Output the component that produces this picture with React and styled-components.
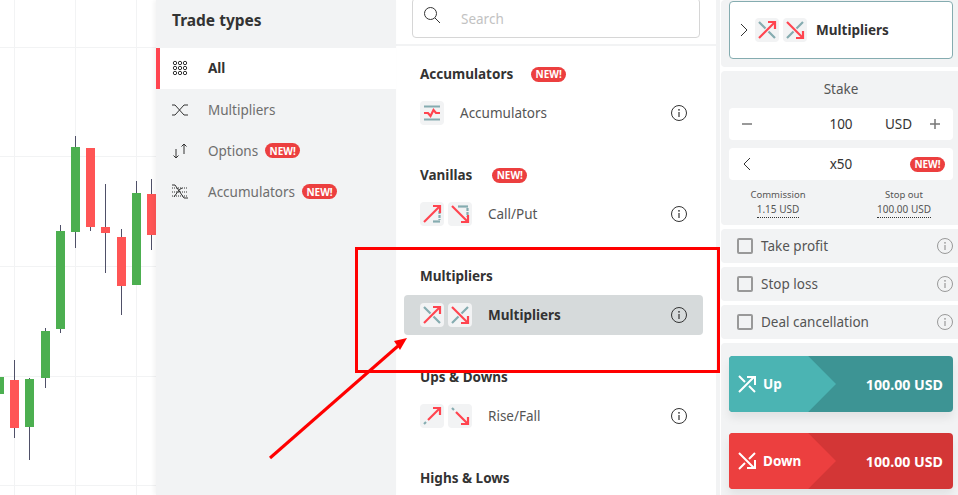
import styled, { createGlobalStyle } from "styled-components";

const GlobalStyle = createGlobalStyle`
  html, body {
    margin: 0;
    height: 100%;
    overflow: hidden;
    background: #fff;
    font-family: "Noto Sans", "Liberation Sans", sans-serif;
  }
`;

const RED = "#ff444f";
const TEAL = "#85acb0";

const candles = [
  { x: -5, top: 377, bottom: 394, up: true },
  { x: 10, top: 380, bottom: 428, wickTop: 360, wickBottom: 438 },
  { x: 25, top: 379, bottom: 427, wickTop: 378, wickBottom: 460, up: true },
  { x: 41, top: 331, bottom: 378, wickTop: 328, wickBottom: 388, up: true },
  { x: 56, top: 231, bottom: 329, wickTop: 225, wickBottom: 333, up: true },
  { x: 71, top: 147, bottom: 232, wickTop: 136, wickBottom: 248, up: true },
  { x: 86, top: 148, bottom: 227, wickTop: 148, wickBottom: 231 },
  { x: 101, top: 227, bottom: 233, wickTop: 184, wickBottom: 273 },
  { x: 117, top: 237, bottom: 286, wickTop: 229, wickBottom: 315 },
  { x: 132, top: 193, bottom: 285, wickTop: 181, wickBottom: 285, up: true },
  { x: 147, top: 194, bottom: 235, wickTop: 179, wickBottom: 250 },
];

const Page = styled.div`
  position: relative;
  display: flex;
  width: 958px;
  height: 495px;
  overflow: hidden;
`;

const ChartWrap = styled.div`
  width: 156px;
  flex-shrink: 0;
  svg { display: block; }
`;

const Sidebar = styled.nav`
  width: 240px;
  flex-shrink: 0;
  background: #f2f3f4;
  box-shadow: -2px 0 4px rgba(0, 0, 0, 0.05);
  z-index: 1;
`;

const SideTitle = styled.h2`
  height: 48px;
  margin: 0;
  padding: 10px 0 0 16px;
  box-sizing: border-box;
  font-size: 15.5px;
  line-height: 20px;
  font-weight: 700;
  color: #333;
`;

const SideRow = styled.div`
  display: flex;
  align-items: center;
  height: 41px;
  box-sizing: border-box;
  padding: 0 0 ${(p) => (p.$active ? 2 : 0)}px 12px;
  border-left: 4px solid ${(p) => (p.$active ? RED : "transparent")};
  background: ${(p) => (p.$active ? "#fff" : "transparent")};
  color: ${(p) => (p.$active ? "#333" : "#6e6e6e")};
  font-size: 13.5px;
  font-weight: ${(p) => (p.$active ? 700 : 400)};
  svg { flex-shrink: 0; margin-right: 20px; }
`;

const Badge = styled.span`
  display: inline-flex;
  align-items: center;
  justify-content: center;
  width: 35px;
  height: 15px;
  margin-left: ${(p) => p.$gap || 7}px;
  border-radius: 8px;
  background: #ec3f3f;
  color: #fff;
  font-size: 10px;
  font-weight: 700;
`;

const Main = styled.main`
  width: 324px;
  flex-shrink: 0;
  box-sizing: border-box;
  border-right: 4px solid #f2f3f4;
`;

const SearchBar = styled.div`
  height: 48px;
  box-sizing: border-box;
  padding-left: 16px;
  border-bottom: 2px solid #f2f3f4;
`;

const SearchBox = styled.div`
  display: flex;
  align-items: center;
  width: 288px;
  height: 40px;
  margin-top: -2px;
  box-sizing: border-box;
  border: 1px solid #d6d6d6;
  border-radius: 4px;
  color: #c2c2c2;
  font-size: 13.5px;
  svg { margin: -6px 20px 0 10px; }
`;

const SearchText = styled.span`
  padding-top: 2px;
`;

const Section = styled.section`
  height: 101px;
  padding: 18px 13px 0 8px;
  box-sizing: border-box;
`;

const Heading = styled.h3`
  display: flex;
  align-items: center;
  height: 20px;
  margin: 0 0 9px;
  padding-left: 16px;
  font-size: 13.5px;
  font-weight: 700;
  color: #333;
`;

const Item = styled.div`
  display: flex;
  align-items: center;
  height: 40px;
  padding: 0 16px;
  border-radius: 4px;
  background: ${(p) => (p.$active ? "#d6dadb" : "transparent")};
  color: ${(p) => (p.$active ? "#333" : "#555")};
  font-size: 13.5px;
  font-weight: ${(p) => (p.$active ? 700 : 400)};
`;

const Tiles = styled.div`
  display: flex;
  gap: 4px;
  margin-right: 16px;
`;

const Tile = styled.span`
  display: block;
  width: 24px;
  height: 24px;
  border-radius: 4px;
  background: #f2f3f4;
  svg { display: block; }
`;

const Label = styled.span`
  flex: 1;
`;

const Aside = styled.aside`
  flex: 1;
  display: flex;
  flex-direction: column;
  gap: 4px;
  margin-left: 1px;
`;

const Panel = styled.div`
  box-sizing: border-box;
  padding: ${(p) => p.$pad || "8px 5px 8px 8px"};
  height: ${(p) => p.$h}px;
  flex-shrink: 0;
  background: #f2f3f4;
  border-radius: 4px 0 0 4px;
`;

const ContractCard = styled.div`
  display: flex;
  align-items: center;
  height: 58px;
  box-sizing: border-box;
  padding-left: 10px;
  border: 1px solid ${TEAL};
  border-radius: 4px;
  background: #fff;
  color: #333;
  font-size: 13.5px;
  font-weight: 700;
  ${Tiles} { margin: 0 9px 0 7px; }
`;

const StakeLabel = styled.div`
  height: 20px;
  margin: 0 0 9px;
  line-height: 20px;
  text-align: center;
  font-size: 13.5px;
  color: #555;
`;

const InputRow = styled.div`
  display: grid;
  grid-template-columns: 1fr 48px 1fr;
  align-items: center;
  height: 32px;
  margin-bottom: 8px;
  padding: 0 12px;
  border-radius: 4px;
  background: #fff;
  color: #333;
  font-size: 13.5px;
  text-align: center;
`;

const RowStart = styled.div`
  display: flex;
  align-items: center;
  padding-left: ${(p) => p.$inset || 0}px;
`;

const RowEnd = styled.div`
  display: flex;
  align-items: center;
  justify-content: space-between;
  padding-left: 20px;
`;

const RowBadge = styled.div`
  display: flex;
  justify-content: flex-end;
  margin-right: -4px;
`;

const Stats = styled.div`
  display: flex;
  justify-content: space-between;
`;

const Stat = styled.div`
  width: 98px;
  text-align: center;
  font-size: 9.5px;
  line-height: 14px;
  color: #555;
  b {
    display: inline-block;
    font-size: 10px;
    font-weight: 400;
    padding-bottom: 1px;
    border-bottom: 1px dotted #333;
  }
`;

const OptionRow = styled.div`
  display: flex;
  align-items: center;
  height: 34px;
  flex-shrink: 0;
  padding: 0 5px 0 16px;
  background: #f2f3f4;
  border-radius: 4px 0 0 4px;
  color: #555;
  font-size: 13.5px;
`;

const Check = styled.span`
  width: 16px;
  height: 16px;
  margin-right: 8px;
  box-sizing: border-box;
  border: 2px solid #999;
  border-radius: 2px;
`;

const BuyWrap = styled.div`
  margin-bottom: 21px;
  border-radius: 4px;
  box-shadow: 0 6px 10px rgba(0, 0, 0, 0.07);
`;

const Buy = styled.div`
  display: flex;
  align-items: center;
  justify-content: space-between;
  height: 56px;
  border-radius: 4px;
  overflow: hidden;
  background: ${(p) => (p.$down ? "#d33636" : "#3d9494")};
  color: #fff;
  font-size: 13.5px;
  font-weight: 700;
`;

const BuyLeft = styled.div`
  display: flex;
  align-items: center;
  gap: 7px;
  width: 107px;
  height: 100%;
  padding-left: 9px;
  box-sizing: border-box;
  background: ${(p) => (p.$down ? "#ec3f3f" : "#4bb4b3")};
  clip-path: polygon(0 0, 74% 0, 100% 50%, 74% 100%, 0 100%);
`;

const BuyAmount = styled.span`
  padding-right: 10px;
  font-size: 14.2px;
`;

const Frame = styled.div`
  position: absolute;
  left: 355px;
  top: 247px;
  width: 365px;
  height: 126px;
  box-sizing: border-box;
  border: 3px solid #f00;
  z-index: 2;
`;

const Arrow = styled.svg`
  position: absolute;
  left: 260px;
  top: 330px;
  z-index: 2;
`;

const ln = { strokeWidth: 2.2, fill: "none" };

function UpArrow({ d = "M4 20 20 4", head = "M13 4h7v7" }) {
  return (
    <g stroke={RED} {...ln}>
      <path d={d} />
      <path d={head} />
    </g>
  );
}

function DownArrow({ d = "M4 4 20 20", head = "M13 20h7v-7" }) {
  return (
    <g stroke={RED} {...ln}>
      <path d={d} />
      <path d={head} />
    </g>
  );
}

const tileArt = {
  acc: (
    <>
      <path d="M4 5.5h16M4 18.5h16" stroke={TEAL} {...ln} />
      <path d="M4 12h4l2.5 3 3-6 2.5 3H20" stroke={RED} {...ln} />
    </>
  ),
  call: (
    <>
      <path d="M13 19.5h7" stroke={TEAL} {...ln} />
      <path d="M19.5 9v9" stroke={TEAL} strokeDasharray="3 1" {...ln} />
      <UpArrow />
    </>
  ),
  put: (
    <>
      <path d="M10 4.5h10" stroke={TEAL} {...ln} />
      <path d="M19.5 6v9" stroke={TEAL} strokeDasharray="3 1" {...ln} />
      <DownArrow />
    </>
  ),
  multUp: (
    <>
      <path d="M4 4l6.500 6.500M13.500 13.500 20 20" stroke={TEAL} {...ln} />
      <UpArrow />
    </>
  ),
  multDown: (
    <>
      <path d="M20 4l-6.500 6.500M10.500 13.500 4 20" stroke={TEAL} {...ln} />
      <DownArrow />
    </>
  ),
  rise: (
    <>
      <path d="M4 20l2-2" stroke={TEAL} {...ln} />
      <UpArrow d="M8 16 20 4" />
    </>
  ),
  fall: (
    <>
      <path d="M4 4l2 2" stroke={TEAL} {...ln} />
      <DownArrow d="M8 8 20 20" />
    </>
  ),
};

function TradeTile({ art }) {
  return (
    <Tile>
      <svg width="24" height="24" viewBox="0 0 24 24">{tileArt[art]}</svg>
    </Tile>
  );
}

function InfoIcon({ color = "#333" }) {
  return (
    <svg width="16" height="16" viewBox="0 0 16 16" fill="none">
      <circle cx="8" cy="8" r="7.5" stroke={color} />
      <circle cx="8" cy="4.8" r="0.9" fill={color} />
      <path d="M8 7v5" stroke={color} strokeWidth="1.2" />
    </svg>
  );
}

function Chevron({ left, color = "#333" }) {
  return (
    <svg width="8" height="14" viewBox="0 0 8 14" fill="none">
      <path d={left ? "M7 1 1 7l6 6" : "M1 1l6 6-6 6"} stroke={color} />
    </svg>
  );
}

function MenuIcon({ kind }) {
  const common = { width: 16, height: 16, viewBox: "0 0 16 16", fill: "none", stroke: "#333" };
  if (kind === "all") {
    const dots = [];
    for (let r = 0; r < 3; r++) {
      for (let c = 0; c < 3; c++) {
        dots.push(<circle key={`${r}-${c}`} cx={3 + c * 5} cy={3 + r * 5} r="1.7" />);
      }
    }
    return <svg {...common}>{dots}</svg>;
  }
  if (kind === "mult") {
    return (
      <svg {...common}>
        <path d="M0 3h3l9 10h4M0 13h3l9-10h4" />
      </svg>
    );
  }
  if (kind === "options") {
    return (
      <svg {...common}>
        <path d="M4 6v9M1.5 12.5 4 15l2.5-2.5M12 11V1M9.500 3.500 12 1l2.500 2.500" />
      </svg>
    );
  }
  return (
    <svg {...common}>
      <path d="M0 1h3l9 13h4" />
      <path d="M2 13l5-7 3-2" />
      <path d="M0 4h16M0 8h16M0 12h16" strokeDasharray="1 1" />
    </svg>
  );
}

function BuyIcon({ down }) {
  return (
    <svg width="18" height="18" viewBox="0 0 18 18" fill="none" stroke="#fff" strokeWidth="2">
      {down ? (
        <path d="M1 1l15 15M9 16h8V8M1 17l6-6M11 7l6-6" />
      ) : (
        <path d="M1 17 16 2M9 2h8v8M1 1l6 6M11 11l6 6" />
      )}
    </svg>
  );
}

function SearchIcon() {
  return (
    <svg width="18" height="18" viewBox="0 0 18 18" fill="none" stroke="#333">
      <circle cx="7.5" cy="7.5" r="6" />
      <path d="M12 12l5 5" />
    </svg>
  );
}

function Chart() {
  return (
    <ChartWrap>
      <svg width="156" height="495" viewBox="0 0 156 495">
        <g stroke="#f2f3f4">
          {[14.5, 75.5, 136.5].map((x) => <path key={x} d={`M${x} 0v495`} />)}
          {[47.5, 156.5, 266.5, 376.5, 485.5].map((y) => <path key={y} d={`M0 ${y}h156`} />)}
        </g>
        {candles.map((c) => (
          <g key={c.x}>
            {c.wickTop && <path d={`M${c.x + 4.5} ${c.wickTop}V${c.wickBottom}`} stroke="#4f5068" />}
            <rect x={c.x} y={c.top} width="9" height={c.bottom - c.top} fill={c.up ? "#4caf50" : "#ff5555"} />
          </g>
        ))}
      </svg>
    </ChartWrap>
  );
}

const menu = [
  { kind: "all", label: "All", active: true },
  { kind: "mult", label: "Multipliers" },
  { kind: "options", label: "Options", isNew: true },
  { kind: "acc", label: "Accumulators", isNew: true },
];

const sections = [
  { title: "Accumulators", isNew: true, gap: 18, label: "Accumulators", art: ["acc"] },
  { title: "Vanillas", isNew: true, gap: 20, label: "Call/Put", art: ["call", "put"] },
  { title: "Multipliers", label: "Multipliers", art: ["multUp", "multDown"], active: true },
  { title: "Ups & Downs", label: "Rise/Fall", art: ["rise", "fall"] },
  { title: "Highs & Lows" },
];

export default function App() {
  return (
    <>
      <GlobalStyle />
      <Page>
        <Chart />
        <Sidebar>
          <SideTitle>Trade types</SideTitle>
          {menu.map((m) => (
            <SideRow key={m.kind} $active={m.active}>
              <MenuIcon kind={m.kind} />
              {m.label}
              {m.isNew && <Badge>NEW!</Badge>}
            </SideRow>
          ))}
        </Sidebar>
        <Main>
          <SearchBar>
            <SearchBox>
              <SearchIcon />
              <SearchText>Search</SearchText>
            </SearchBox>
          </SearchBar>
          {sections.map((s) => (
            <Section key={s.title}>
              <Heading>
                {s.title}
                {s.isNew && <Badge $gap={s.gap}>NEW!</Badge>}
              </Heading>
              {s.art && (
                <Item $active={s.active}>
                  <Tiles>
                    {s.art.map((a) => <TradeTile key={a} art={a} />)}
                  </Tiles>
                  <Label>{s.label}</Label>
                  <InfoIcon />
                </Item>
              )}
            </Section>
          ))}
        </Main>
        <Aside>
          <Panel $h={67} $pad="1px 5px 8px 8px">
            <ContractCard>
              <Chevron />
              <Tiles>
                <TradeTile art="multUp" />
                <TradeTile art="multDown" />
              </Tiles>
              Multipliers
            </ContractCard>
          </Panel>
          <Panel $h={154}>
            <StakeLabel>Stake</StakeLabel>
            <InputRow>
              <RowStart>
                <svg width="12" height="12" viewBox="0 0 12 12"><path d="M1 6h10" stroke="#777" strokeWidth="1.5" /></svg>
              </RowStart>
              100
              <RowEnd>
                USD
                <svg width="12" height="12" viewBox="0 0 12 12"><path d="M1 6h10M6 1v10" stroke="#777" strokeWidth="1.5" /></svg>
              </RowEnd>
            </InputRow>
            <InputRow>
              <RowStart $inset={2}>
                <Chevron left />
              </RowStart>
              x50
              <RowBadge>
                <Badge>NEW!</Badge>
              </RowBadge>
            </InputRow>
            <Stats>
              <Stat>Commission<br /><b>1.15 USD</b></Stat>
              <Stat>Stop out<br /><b>100.00 USD</b></Stat>
            </Stats>
          </Panel>
          {["Take profit", "Stop loss", "Deal cancellation"].map((t) => (
            <OptionRow key={t}>
              <Check />
              <Label>{t}</Label>
              <InfoIcon color="#999" />
            </OptionRow>
          ))}
          <Panel $h={160} $pad="13px 5px 0 8px">
            <BuyWrap>
              <Buy>
                <BuyLeft>
                  <BuyIcon />
                  Up
                </BuyLeft>
                <BuyAmount>100.00 USD</BuyAmount>
              </Buy>
            </BuyWrap>
            <BuyWrap>
              <Buy $down>
                <BuyLeft $down>
                  <BuyIcon down />
                  Down
                </BuyLeft>
                <BuyAmount>100.00 USD</BuyAmount>
              </Buy>
            </BuyWrap>
          </Panel>
        </Aside>
        <Frame />
        <Arrow width="160" height="135" viewBox="0 0 160 135">
          <path d="M10 128 138 16" stroke="#f00" strokeWidth="3" fill="none" />
          <path d="M147 8 134 11 140 20z" fill="#f00" />
        </Arrow>
      </Page>
    </>
  );
}
